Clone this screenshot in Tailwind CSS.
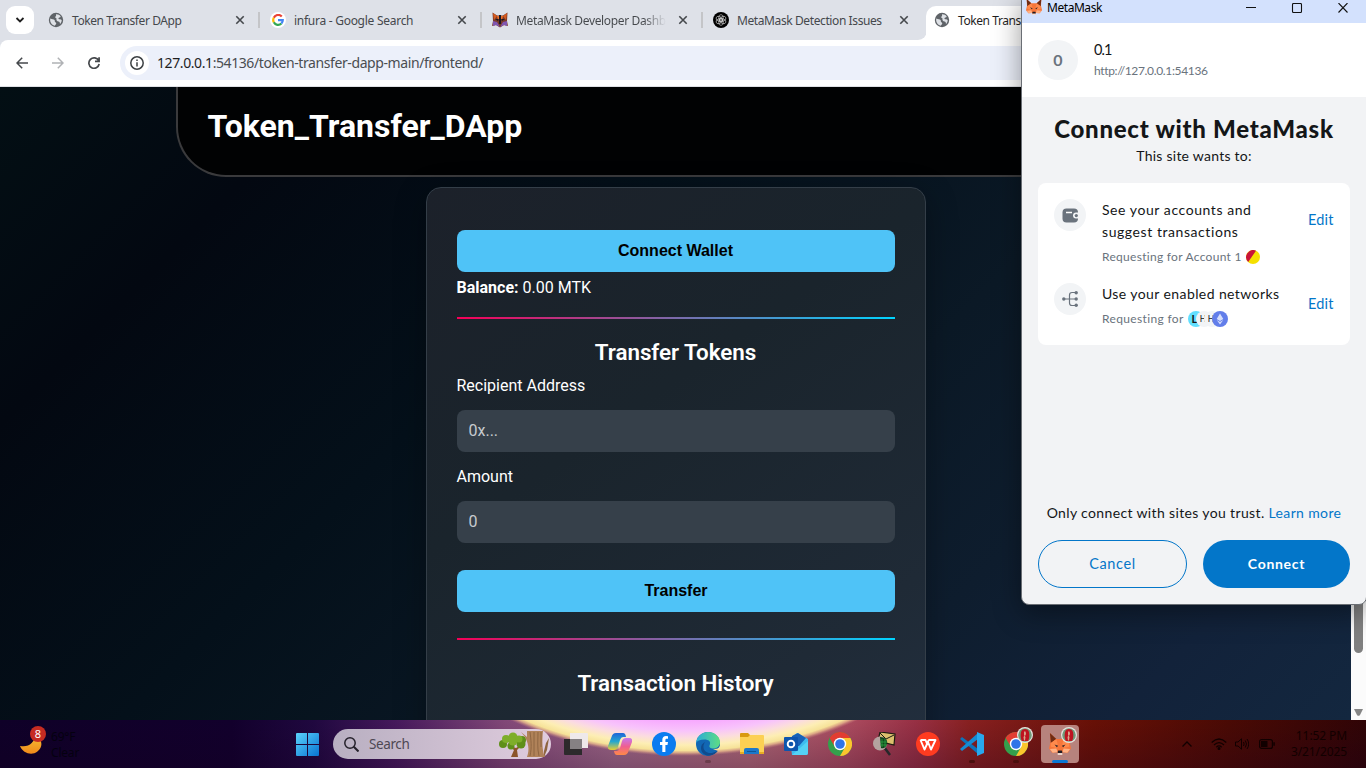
<!DOCTYPE html>
<html lang="en">
<head>
<meta charset="utf-8">
<title>Token Transfer DApp</title>
<script src="https://cdn.jsdelivr.net/npm/@tailwindcss/browser@4"></script>
</head>
<body class="overflow-hidden">
<svg width="0" height="0" class="absolute">
  <defs>
    <symbol id="globe" viewBox="0 0 16 16"><circle cx="8" cy="8" r="7.2" fill="#5f6368"/><path d="M2.300 6.600c1.700 1 3.500.3 4.300 1.500.5.900-.2 1.600.8 2.200 1 .5 1.200 1.200.3 2.300l-1 1.200C3.500 13 1.600 10 2.300 6.600zM8 2.200c1.800-.2 3.700.7 4.700 2.200-.5 1.300-1.400.6-2.100 1.500-.6.900.6 1.500 1.700 1.300l1.400.7c0 1.600-.7 3-1.700 4-.2-1.200-.3-2-1.500-2.300-1.500-.3-2.500-1.300-2-2.500.4-1-.6-1.100-1.200-1.700-.5-.6.900-1 .8-1.900z" fill="#dee1e6"/></symbol>
    <symbol id="close" viewBox="0 0 10 10"><path d="M1.300 1.300l7.400 7.400M8.700 1.300L1.300 8.700" stroke="#45484c" stroke-width="1.600" fill="none"/></symbol>
    <symbol id="fox" viewBox="0 0 24 24"><path d="M1 0l7 6.500h8L23 0l-.5 10L24 17l-3.500 4.500L15 21l-1 2.500h-4L9 21l-5.500.5L0 17l1.500-7z" fill="#f7763a"/><path d="M1 0l7 6.500L2 11zM23 0l-7 6.500 6 4.500z" fill="#6f2c14"/><path d="M2 11l6-4.500 1.500 6L8 16l-6-1zM22 11l-6-4.500-1.500 6L16 16l6-1z" fill="#ff8a4c"/><path d="M6 12.500l4 1.500-1.500 1.500zM18 12.500L14 14l1.500 1.500z" fill="#33272b"/><path d="M1 17.500L8 17l1.500 4H8l-4 .5zM23 17.500L16 17l-1.500 4H16l4 .5z" fill="#ffb184"/><path d="M10 19h4l.7 2-1 1h-3.400l-1-1z" fill="#201c24"/><path d="M9.500 22h5v1.800h-5z" fill="#f1ece8"/></symbol>
    <symbol id="chrome" viewBox="0 0 24 24"><circle cx="12" cy="12" r="12" fill="#34a04c"/><path d="M1.600 6A12 12 0 0 1 22.400 6H12l-5 9z" fill="#e23d32"/><path d="M22.400 6A12 12 0 0 1 12 24l5.200-9L12 6z" fill="#fbc62d"/><circle cx="12" cy="12" r="6.200" fill="#fff"/><circle cx="12" cy="12" r="4.800" fill="#2f74e8"/></symbol>
    <symbol id="avatar" viewBox="0 0 16 16"><circle cx="8" cy="8" r="8" fill="#e8e3e0"/><circle cx="8" cy="8" r="6.800" fill="#6f9a78"/><path d="M4 5c1-4 7-4 8 0 .6 3 .4 6-.8 9H4.800C3.500 11 3.400 8 4 5z" fill="#bd1420"/><path d="M7 4.500h1.500l.5 2-.5 2H7zM6.500 10l1-1.500 1 1.500-.5 3.500H7z" fill="#d8a58a"/></symbol>
  </defs>
</svg>

<div class="relative flex h-[768px] w-[1366px] flex-col overflow-hidden bg-black font-['Noto_Sans',sans-serif]">

  <!-- Tab strip -->
  <div class="flex h-10 shrink-0 items-start bg-[#dee1e8]">
    <button class="mt-1.5 ml-1.5 flex h-7 w-7 items-center justify-center rounded-[9px] bg-white">
      <svg class="h-2.5 w-2.5" viewBox="0 0 10 10"><path d="M1.500 3l3.500 3.500L8.500 3" fill="none" stroke="#1f1f1f" stroke-width="1.800"/></svg>
    </button>
    <div class="ml-3.5 flex h-10 w-[221px] items-center">
      <svg class="h-4 w-4"><use href="#globe"/></svg>
      <span class="mt-0.5 ml-2 w-[163px] text-[12px] tracking-[-0.42px] whitespace-nowrap text-[#45484c]">Token Transfer DApp</span>
      <svg class="h-2.5 w-2.5"><use href="#close"/></svg>
      <span class="ml-[13px] h-4 w-0.5 shrink-0 bg-[#c4c5c8]"></span>
    </div>
    <div class="flex h-10 w-[222px] items-center">
      <span class="ml-px flex h-4 w-4 shrink-0 items-center justify-center rounded-full bg-white">
        <svg class="h-3 w-3" viewBox="0 0 24 24" fill="none" stroke-width="4.500"><path d="M19.500 5A9.700 9.700 0 0 0 3.600 7.500" stroke="#ea4335"/><path d="M3.600 7.500a9.700 9.700 0 0 0 0 9" stroke="#fbbc05"/><path d="M3.600 16.500a9.700 9.700 0 0 0 15.200 2.600" stroke="#34a853"/><path d="M12 12h9.500c0 3-1 5.500-2.700 7.100" stroke="#4285f4"/></svg>
      </span>
      <span class="mt-0.5 ml-2 w-[163px] text-[12px] tracking-[-0.27px] whitespace-nowrap text-[#45484c]">infura - Google Search</span>
      <svg class="h-2.5 w-2.5"><use href="#close"/></svg>
      <span class="ml-[13px] h-4 w-0.5 shrink-0 bg-[#c4c5c8]"></span>
    </div>
    <div class="flex h-10 w-[221px] items-center">
      <svg class="ml-[1px] h-4 w-4 shrink-0" viewBox="0 0 16 16"><path d="M.500.500L5 3.500h6L15.500.500 15 9l1 5-4-1-4 2.500L4 13l-4 1 1-5z" fill="#7b3a28"/><path d="M1 1l4 3-3 4zM15 1l-4 3 3 4z" fill="#d85b1e"/><path d="M5 4h6l-1 4H6z" fill="#ef7025"/><path d="M1 9l4 1 3 5-4-2-3 1zM15 9l-4 1-3 5 4-2 3 1z" fill="#7f55b0"/><path d="M3 7h4l-1 2zM13 7H9l1 2zM7 3h2v9H7z" fill="#1e1822"/></svg>
      <span class="mt-0.5 ml-2 w-[150px] overflow-hidden bg-linear-to-r from-[#45484c] from-85% to-transparent bg-clip-text text-[12px] tracking-[-0.36px] whitespace-nowrap text-transparent">MetaMask Developer Dashb</span>
      <svg class="ml-3 h-2.5 w-2.5"><use href="#close"/></svg>
      <span class="ml-[13px] h-4 w-0.5 shrink-0 bg-[#c4c5c8]"></span>
    </div>
    <div class="flex h-10 w-[206px] shrink-0 items-center">
      <svg class="ml-px h-4 w-4 shrink-0" viewBox="0 0 16 16"><circle cx="8" cy="8" r="8" fill="#000"/><g fill="none" stroke="#ddd" stroke-width=".6"><ellipse cx="8" cy="6" rx="2.300" ry="3.400"/><ellipse cx="8" cy="6" rx="2.300" ry="3.400" transform="rotate(60 8 8)"/><ellipse cx="8" cy="6" rx="2.300" ry="3.400" transform="rotate(120 8 8)"/><ellipse cx="8" cy="6" rx="2.300" ry="3.400" transform="rotate(180 8 8)"/><ellipse cx="8" cy="6" rx="2.300" ry="3.400" transform="rotate(240 8 8)"/><ellipse cx="8" cy="6" rx="2.300" ry="3.400" transform="rotate(300 8 8)"/></g></svg>
      <span class="mt-0.5 ml-2 w-[162px] text-[12px] tracking-[-0.4px] whitespace-nowrap text-[#45484c]">MetaMask Detection Issues</span>
      <svg class="h-2.5 w-2.5"><use href="#close"/></svg>
    </div>
    <div class="flex h-10 w-[9px] shrink-0 bg-white"><span class="h-10 w-[9px] rounded-br-[10px] bg-[#dee1e8]"></span></div>
    <div class="mt-1.5 -ml-px flex h-[34px] flex-1 items-center rounded-tl-[10px] bg-white">
      <svg class="mb-1.5 ml-2 h-4 w-4 shrink-0"><use href="#globe"/></svg>
      <span class="mb-1 ml-2 text-[12px] tracking-[-0.42px] whitespace-nowrap text-[#1f1f1f]">Token Transf</span>
    </div>
  </div>

  <!-- Toolbar -->
  <div class="shrink-0 bg-[#dee1e8]">
    <div class="flex h-[47px] items-center rounded-tl-lg border-b border-[#dfe1e5] bg-white">
      <svg class="ml-4 h-3 w-3" viewBox="0 0 12 12" fill="none" stroke="#45484c" stroke-width="1.500"><path d="M12 6H1M6.200.8L1 6l5.200 5.200"/></svg>
      <svg class="ml-6 h-3 w-3" viewBox="0 0 12 12" fill="none" stroke="#b0b2b5" stroke-width="1.500"><path d="M0 6h11M5.800.8L11 6l-5.200 5.200"/></svg>
      <svg class="ml-6 h-3 w-3" viewBox="0 0 12 12" fill="none" stroke="#45484c" stroke-width="1.700"><path d="M10.700 3.700A5.200 5.200 0 1 0 11.200 7M11.100.2v4.200H7"/></svg>
      <div class="ml-5 flex h-[34px] flex-1 items-center rounded-l-full bg-[#ecf0fa]">
        <span class="ml-[5px] flex h-6 w-6 items-center justify-center rounded-full bg-white">
          <svg class="h-3.5 w-3.5" viewBox="0 0 14 14" fill="none" stroke="#3c4043" stroke-width="1.500"><circle cx="7" cy="7" r="6.200"/><path d="M7 6.200v4.200M7 3.500v1.500"/></svg>
        </span>
        <span class="mb-0.5 ml-2 text-[14px] tracking-[-0.41px] whitespace-nowrap text-[#4a4d51]"><span class="text-[#1f1f1f]">127.0.0.1</span>:54136/token-transfer-dapp-main/frontend/</span>
      </div>
    </div>
  </div>

  <!-- Page -->
  <div class="flex h-[633px] shrink-0 font-[Roboto,sans-serif]">
    <main class="flex w-[1351px] flex-col items-center overflow-hidden bg-[linear-gradient(135deg,#030f14_0%,#030811_17%,#04101a_38%,#0b1926_60%,#0e1d2e_74%,#12223a_88%,#13273f_100%)]">
      <header class="flex h-[90px] w-[1000px] shrink-0 items-start rounded-b-[50px] border-2 border-t-0 border-[#3a3a3c] bg-[#010203] pt-[15px] pl-[30px]">
        <h1 class="text-[32px] leading-[48px] font-bold text-white">Token_Transfer_DApp</h1>
      </header>
      <section class="mt-2.5 flex h-[700px] w-[500px] shrink-0 flex-col rounded-[15px] border border-[#343e48] bg-[linear-gradient(145deg,#1c212a_0%,#1a242c_35%,#1f2a36_70%,#243244_100%)] px-[30px] pt-[42px] text-[16px] text-white shadow-[0_8px_32px_rgba(0,0,0,0.3)]">
        <button class="h-[42px] shrink-0 rounded-lg bg-[#4fc3f7] font-['Liberation_Sans',sans-serif] text-[16px] font-bold text-black">Connect Wallet</button>
        <p class="mt-1 leading-6"><b>Balance:</b> 0.00 MTK</p>
        <div class="mt-[17px] h-0.5 shrink-0 bg-linear-to-r/srgb from-[#f50057] to-[#00d4ff]"></div>
        <h2 class="mt-[17px] text-center text-[22.400px] leading-8 font-semibold tracking-[-0.04px]">Transfer Tokens</h2>
        <label class="mt-[6px] leading-6">Recipient Address</label>
        <div class="mt-[12px] flex h-[42px] shrink-0 items-center rounded-lg bg-[#36404a] pl-3 text-[#c7cbcf]">0x...</div>
        <label class="mt-[13px] leading-6">Amount</label>
        <div class="mt-[12px] flex h-[42px] shrink-0 items-center rounded-lg bg-[#36404a] pl-3 text-[#c7cbcf]">0</div>
        <button class="mt-[27px] h-[42px] shrink-0 rounded-lg bg-[#4fc3f7] pl-px font-['Liberation_Sans',sans-serif] text-[16px] font-bold text-black">Transfer</button>
        <div class="mt-[26px] h-0.5 shrink-0 bg-linear-to-r/srgb from-[#f50057] to-[#00d4ff]"></div>
        <h2 class="mt-[27px] text-center text-[22.400px] leading-8 font-semibold tracking-[-0.04px]">Transaction History</h2>
      </section>
    </main>
    <div class="flex w-[15px] flex-col items-center justify-end bg-[#fbfbfb] pb-1">
      <span class="h-[400px] w-[9px] rounded-full bg-[#808080]"></span>
      <svg class="mt-[56px] h-[7px] w-[9px]" viewBox="0 0 9 7"><path d="M0 0h9L6 6a2 2 0 0 1-3 0z" fill="#858585"/></svg>
    </div>
  </div>

  <!-- Taskbar -->
  <div class="relative h-12 shrink-0">
    <svg class="absolute inset-0" width="1366" height="48" viewBox="0 0 1366 48">
      <defs>
        <linearGradient id="tb"><stop offset="0" stop-color="#0f0028"/><stop offset=".17" stop-color="#12002c"/><stop offset=".23" stop-color="#200840"/><stop offset=".29" stop-color="#46195c"/><stop offset=".37" stop-color="#824878"/><stop offset=".45" stop-color="#a06888"/><stop offset=".55" stop-color="#b06878"/><stop offset=".62" stop-color="#ac4c60"/><stop offset=".67" stop-color="#983044"/><stop offset=".71" stop-color="#882020"/><stop offset=".8" stop-color="#681006"/><stop offset=".9" stop-color="#4a0a04"/><stop offset="1" stop-color="#300406"/></linearGradient>
        <linearGradient id="shade" x2="0" y2="1"><stop offset="0" stop-color="#14001e" stop-opacity="0"/><stop offset="1" stop-color="#14001e" stop-opacity=".25"/></linearGradient>
        <radialGradient id="glow" gradientUnits="userSpaceOnUse" cx="0" cy="0" r="1" gradientTransform="translate(684 -120) scale(273 156)"><stop offset=".77" stop-color="#f7a8ff"/><stop offset=".84" stop-color="#f8c4fb"/><stop offset=".885" stop-color="#fbdcdf"/><stop offset=".93" stop-color="#fdeeb4"/><stop offset=".965" stop-color="#f6e298"/><stop offset=".98" stop-color="#e8b98c" stop-opacity=".8"/><stop offset="1" stop-color="#c98282" stop-opacity="0"/></radialGradient>
      </defs>
      <rect width="1366" height="48" fill="url(#tb)"/><rect width="1366" height="48" fill="url(#shade)"/>
      <rect x="480" width="410" height="48" fill="url(#glow)"/>
    </svg>

    <div class="relative flex h-12 items-center">
      <div class="flex w-[296px] items-center pl-5">
        <div class="relative h-8 w-7">
          <svg class="absolute top-1 left-0 h-[26px] w-[22px]" viewBox="0 0 24 28"><defs><linearGradient id="moon" x2="0" y2="1"><stop offset="0" stop-color="#f8c437"/><stop offset="1" stop-color="#f08a1a"/></linearGradient></defs><path d="M0 15c9 2 16-3 17-13 7 5 9 14 2 19-6 5-16 2-19-6z" fill="url(#moon)"/></svg>
          <span class="absolute -top-[2px] left-[10px] flex h-4 w-4 items-center justify-center rounded-full bg-[#c62b22] text-[11px] text-white">8</span>
        </div>
        <div class="mt-0.5 ml-[3px] text-[12px] leading-4 tracking-[-0.2px] text-[#050010]"><p>69°F</p><p>Clear</p></div>
      </div>
      <svg class="h-[23px] w-[23px]" viewBox="0 0 23 23"><defs><linearGradient id="win" x2="1" y2="1"><stop offset="0" stop-color="#5bd3fb"/><stop offset="1" stop-color="#0873d2"/></linearGradient></defs><path d="M0 1q0-1 1-1h10v11H0zM12 0h10q1 0 1 1v10H12zM0 12h11v11H1q-1 0-1-1zM12 12h11v10q0 1-1 1H12z" fill="url(#win)"/></svg>
      <div class="ml-3.5 flex h-[30px] w-[218px] items-center rounded-full bg-linear-to-r from-[#b8afc1] to-[#e0ccde]">
        <svg class="ml-[11px] h-[15px] w-[15px]" viewBox="0 0 15 15" fill="none" stroke="#25212b" stroke-width="1.500"><circle cx="6" cy="6" r="5.200"/><path d="M9.800 9.800l4.700 4.700" stroke-width="2"/></svg>
        <span class="ml-2.5 w-[130px] text-[13.500px] tracking-[-0.4px] text-[#4e4853]">Search</span>
        <svg class="h-[27px] w-[50px]" viewBox="0 0 50 27"><path d="M12 26l3-7-7-5 9 3 7-4-6 6 1 7z" fill="#8b5429"/><g fill="#5f8f19"><circle cx="4" cy="13" r="4"/><circle cx="12" cy="15" r="3.500"/><circle cx="22" cy="13" r="4.500"/><circle cx="23" cy="9" r="4"/></g><g fill="#7eae2a"><circle cx="7" cy="8" r="4"/><circle cx="14" cy="6" r="4.500"/><circle cx="14" cy="10" r="4.500"/><circle cx="20" cy="8" r="3.500"/></g><path d="M28 0h16c-1 9-1 20 2 26H28c3-8 1-14-2-20l-4-5 6 5z" fill="#b08259"/><path d="M45 20l2-8 3-5-2 12-3 7z" fill="#8d6440"/><path d="M31 1c1 8 2 15 0 24M35 1v24M39 1c0 8-1 16 1 24M42 1v15" stroke="#8a6240" fill="none" stroke-width=".9"/></svg>
      </div>
      <div class="ml-[13px] h-6 w-6">
        <svg viewBox="0 0 24 24"><path d="M6 1h17q1 0 1 1v14H6z" fill="#eee9ea"/><path d="M0 7h18v16H1q-1 0-1-1z" fill="#2d2a2c"/><path d="M6 7h12v10H6z" fill="#858183"/></svg>
      </div>
      <svg class="ml-5 h-6 w-6" viewBox="0 0 24 24"><defs><linearGradient id="cpa" x2="0" y2="1"><stop offset="0" stop-color="#2165d8"/><stop offset=".5" stop-color="#25a7cf"/><stop offset="1" stop-color="#e9cf31"/></linearGradient><linearGradient id="cpb" x2="0" y2="1"><stop offset="0" stop-color="#c778ee"/><stop offset=".5" stop-color="#ef5f91"/><stop offset="1" stop-color="#ff8a45"/></linearGradient></defs><path d="M8 1h7q2.500 0 3 4h-3q-2 0-3 3l-2 7q-1 3-4 3H3q-4 0-3-4L3.500 5q1-4 4.500-4z" fill="url(#cpa)"/><path d="M16 23H9q-2.500 0-3-4h3q2 0 3-3l2-7q1-3 4-3h3q4 0 3 4l-3.500 9q-1 4-4.500 4z" fill="url(#cpb)"/></svg>
      <svg class="ml-5 h-6 w-6" viewBox="0 0 24 24"><circle cx="12" cy="12" r="12" fill="#0a7cf0"/><path d="M10.300 20v-7H8v-3h2.300V8c0-2.700 1.500-4 3.700-4l2 .2v2.600h-1.300c-1 0-1.300.6-1.300 1.400V10H16l-.5 3h-2.100v7z" fill="#fff"/></svg>
      <div class="relative ml-5 h-6 w-6">
        <svg viewBox="0 0 24 24"><defs><linearGradient id="eg" x2="1"><stop offset="0" stop-color="#2aabd9"/><stop offset="1" stop-color="#5edd83"/></linearGradient><clipPath id="ec"><path d="M0 0h24v14c-1.500 3-4 3-7 3l5 2c-5 6-13 6-18 3C0 19-.5 15 0 12z"/></clipPath></defs><g clip-path="url(#ec)"><circle cx="12" cy="12" r="12" fill="#1267b4"/><path d="M0 11C1 4 6 0 12 0c7 0 12 5 12 10 0 4-3 6.500-6.500 6.500S13 15 13.500 13.500c2-4-1-6-5-6C4 7.500 1 9 0 11z" fill="url(#eg)"/><path d="M9 10c-4 6 0 12 7 11l6-2c-4 6-13 6-16 1-2-4-1-8 3-10z" fill="#114b8d"/></g></svg>
        <span class="absolute -bottom-[7px] left-[9px] h-[3px] w-1.5 rounded-full bg-[#6b3d4c]"></span>
      </div>
      <svg class="ml-5 h-6 w-6" viewBox="0 0 24 24"><path d="M0 2q0-1 1-1h7l2 2v6H0z" fill="#d99a10"/><path d="M0 5h8l2-2h13q1 0 1 1v18H0z" fill="#fcd053"/><path d="M0 20h24v2H0z" fill="#e8ac24"/><path d="M4 22v-4q0-2 2-2h11q2 0 2 2v4z" fill="#1c78ca"/><path d="M7 19h9v1H7z" fill="#0f5696"/></svg>
      <svg class="ml-5 h-6 w-6" viewBox="0 0 24 24"><path d="M6 6l7-5 11 6v14q0 2-2 2H8z" fill="#3dbcf0"/><path d="M8 4l6-3 8 5-7 8H8z" fill="#1762b8"/><path d="M24 9v12q0 2-2 2H8z" fill="#54d2f5"/><rect y="5" width="14" height="14" rx="1" fill="#0c55ae"/><circle cx="7" cy="12" r="3.300" fill="none" stroke="#fff" stroke-width="1.900"/></svg>
      <svg class="ml-5 h-6 w-6"><use href="#chrome"/></svg>
      <svg class="ml-5 h-6 w-6" viewBox="0 0 24 24"><path d="M8 0l15 2-1 11L6 9z" fill="#dcc06d" stroke="#1d1b12" stroke-width="1.200"/><path d="M8 1l6 6 8-4" fill="none" stroke="#1d1b12"/><path d="M12 15l6 8" stroke="#25272a" stroke-width="2.500"/><circle cx="8" cy="11.500" r="7" fill="#b4a29f"/><path d="M8 5c5 0 8 3 7 7s-4 5-6 4z" fill="#10481b"/><path d="M10 7v8M13 7v8M8 10h7M8 13h7" stroke="#2fa142" stroke-width=".8"/></svg>
      <svg class="ml-5 h-6 w-6" viewBox="0 0 24 24"><circle cx="12" cy="12" r="12" fill="#ff3b20"/><path d="M4.500 8h5l2 5M4.500 8l4 9.500L12 10l3 7.500L19.500 8H13l-1.500 2" fill="none" stroke="#fff" stroke-width="1.900" stroke-linejoin="round"/></svg>
      <div class="relative ml-5 h-6 w-6">
        <svg viewBox="0 0 24 24"><path d="M0 7l2-2 16 12v5z" fill="#0d74bb"/><path d="M0 17l2 2L18 7V1z" fill="#168bd3"/><path d="M17 0l7 3v18l-7 3z" fill="#28a8ee"/></svg>
        <span class="absolute -bottom-[7px] left-[9px] h-[3px] w-1.5 rounded-full bg-[#4a0f0d]"></span>
      </div>
      <div class="relative ml-5 h-6 w-6">
        <svg class="h-6 w-6"><use href="#chrome"/></svg>
        <svg class="absolute -top-[5px] left-[13px] h-4 w-4"><use href="#avatar"/></svg>
        <span class="absolute -bottom-[7px] left-[9px] h-[3px] w-1.5 rounded-full bg-[#4a0f0d]"></span>
      </div>
      <div class="relative ml-[13px] flex h-[38px] w-[38px] items-center justify-center rounded bg-[#b7837d]">
        <svg class="h-[22px] w-6"><use href="#fox"/></svg>
        <svg class="absolute top-0.5 left-5 h-4 w-4"><use href="#avatar"/></svg>
        <span class="absolute bottom-0 left-[11px] h-[3px] w-4 rounded-full bg-[#0a78d4]"></span>
      </div>
      <div class="ml-[103px] flex items-center">
        <svg class="h-1.5 w-2.5" viewBox="0 0 10 6"><path d="M.500 5.500L5 1l4.500 4.500" fill="none" stroke="#100" stroke-width="1.300"/></svg>
        <svg class="ml-[19px] h-3 w-4" viewBox="0 0 16 12" fill="none" stroke="#100" stroke-width="1.200"><path d="M.700 4.500q7.300-7 14.600 0M3 7q5-4.700 10 0M5.300 9.200q2.700-2.500 5.400 0"/><circle cx="8" cy="10.500" r=".9" fill="#100"/></svg>
        <svg class="ml-2 h-3 w-3.5" viewBox="0 0 14 12" fill="none" stroke="#100"><path d="M.500 4h2.500L6.500.800v10.400L3 8H.500zM8.500 4q1.200 2 0 4M10.300 2.500q2.400 3.500 0 7M12 1q3.500 5 0 10"/></svg>
        <svg class="ml-2.5 h-2.5 w-4" viewBox="0 0 16 10"><rect x=".600" y=".600" width="12.800" height="8.800" rx="2" fill="none" stroke="#100" stroke-width="1.200"/><path d="M2 2h6.500v6H2zM14.300 3.300h1.500v3.400h-1.500z" fill="#100"/></svg>
      </div>
      <div class="ml-auto pr-[19px] text-right text-[12px] leading-4 tracking-[-0.1px] text-[#120000]"><p>11:52 PM</p><p>3/21/2025</p></div>
    </div>
  </div>

  <!-- Wallet popup window -->
  <div class="absolute top-[-7px] left-[1021px] flex h-[612px] w-[346px] flex-col overflow-hidden rounded-lg border border-[#6a6e74] bg-[#f2f3f5] font-[Lato,sans-serif] text-[14px] text-[#141618] shadow-[0_8px_28px_rgba(0,0,0,0.4)]">
    <div class="flex h-[29px] shrink-0 items-center bg-[#d3e1fd] font-['Noto_Sans',sans-serif]">
      <svg class="mb-1 ml-1 h-4 w-4"><use href="#fox"/></svg>
      <span class="mb-px ml-[5px] w-[55px] text-[12px] tracking-[-0.45px] text-black">MetaMask</span>
      <svg class="mb-px ml-[144px] h-2.5 w-[102px]" viewBox="0 0 102 10" fill="none" stroke="#111" stroke-width="1.100"><path d="M0 4.500h10M92.500 0l9 9.500M101.500 0l-9 9.500"/><rect x="46.500" y=".500" width="9" height="9" rx="1"/></svg>
    </div>
    <div class="flex h-[74px] shrink-0 items-center bg-white pl-4">
      <span class="flex h-10 w-10 items-center justify-center rounded-full bg-[#f2f4f6] text-[16px] font-bold text-[#6a737d]">0</span>
      <div class="ml-4"><p class="text-[14.500px] leading-[22px] tracking-[-0.9px]">0.1</p><p class="text-[12px] leading-5 tracking-[-0.34px] text-[#6a737d]">http://127.0.0.1:54136</p></div>
    </div>
    <h1 class="mt-4 shrink-0 text-center text-[24px] leading-8 font-black tracking-[0.73px] whitespace-nowrap">Connect with MetaMask</h1>
    <p class="text-center leading-[22px] tracking-[0.25px]">This site wants to:</p>
    <div class="mx-4 mt-4 flex h-[162px] shrink-0 flex-col rounded-lg bg-white p-4">
      <div class="flex">
        <span class="flex h-8 w-8 items-center justify-center rounded-full bg-[#f2f4f6]"><svg class="h-[15px] w-[17px]" viewBox="0 0 17 15"><rect x=".500" y=".500" width="15.500" height="14" rx="4" fill="#6a737d"/><path d="M4 4.500h6" stroke="#fff" stroke-width="1.400"/><path d="M17 4.600h-3a3 3 0 0 0 0 6h3z" fill="#f2f4f6"/><circle cx="14.300" cy="7.600" r="1.600" fill="#6a737d"/></svg></span>
        <div class="ml-4 w-[206px]"><p class="leading-[22px] tracking-[0.57px]">See your accounts and<br>suggest transactions</p><p class="mt-1 flex items-center text-[12px] leading-5 tracking-[0.29px] text-[#6a737d]">Requesting for Account 1<svg class="ml-1 h-3.5 w-3.5" viewBox="0 0 14 14"><circle cx="7" cy="7" r="7" fill="#f5e000"/><path d="M10 .7A7 7 0 0 0 2.200 12z" fill="#c91439"/></svg></p></div>
        <span class="mt-2.5 text-[14.500px] leading-[22px] tracking-[0.2px] text-[#0376c9]">Edit</span>
      </div>
      <div class="mt-4 flex">
        <span class="flex h-8 w-8 items-center justify-center rounded-full bg-[#f2f4f6]"><svg class="h-4 w-4" viewBox="0 0 16 16" fill="none" stroke="#6a737d" stroke-width="1.200"><path d="M1.500 8h13M14 1.500h-4q-2.500 0-2.500 2.500v8q0 2.500 2.500 2.500h4"/><g fill="#6a737d" stroke="none"><circle cx="1.800" cy="8" r="1.700"/><circle cx="14.200" cy="1.700" r="1.700"/><circle cx="14.200" cy="8" r="1.700"/><circle cx="14.200" cy="14.300" r="1.700"/></g></svg></span>
        <div class="ml-4 w-[206px]"><p class="leading-[22px] tracking-[0.41px]">Use your enabled networks</p>
          <div class="mt-1 flex items-center text-[12px] leading-5 tracking-[0.35px] text-[#6a737d]">Requesting for
            <span class="ml-1 flex font-[Inter,sans-serif] text-[9px] tracking-normal text-[#141618]">
              <span class="flex h-4 w-4 items-center rounded-full bg-[#61dfff] pl-1 text-[10px] font-bold">L</span>
              <span class="-ml-2 flex h-4 w-4 items-center overflow-hidden rounded-full bg-[#f2f4f6] pl-1">H</span>
              <span class="-ml-2 flex h-4 w-4 items-center overflow-hidden rounded-full bg-[#f2f4f6] pl-1">H</span>
              <svg class="-ml-2 h-4 w-4" viewBox="0 0 16 16"><circle cx="8" cy="8" r="8" fill="#627eea"/><path d="M8 2.500L11.300 8 8 10 4.700 8zM8 11l3.300-2L8 13.500 4.700 9z" fill="#d5ddfb"/></svg>
            </span>
          </div>
        </div>
        <span class="mt-2.5 text-[14.500px] leading-[22px] tracking-[0.2px] text-[#0376c9]">Edit</span>
      </div>
    </div>
    <p class="mt-auto text-center leading-[22px] tracking-[0.36px] whitespace-nowrap">Only connect with sites you trust. <span class="text-[#0376c9]">Learn more</span></p>
    <div class="mt-4 mb-4 flex h-12 shrink-0 gap-4 px-4">
      <button class="w-[149px] rounded-full border border-[#0376c9] text-[14.500px] tracking-[0.6px] text-[#0376c9]">Cancel</button>
      <button class="w-[147px] rounded-full bg-[#0376c9] pb-0.5 font-bold tracking-[0.7px] text-white">Connect</button>
    </div>
  </div>
</div>
</body>
</html>
